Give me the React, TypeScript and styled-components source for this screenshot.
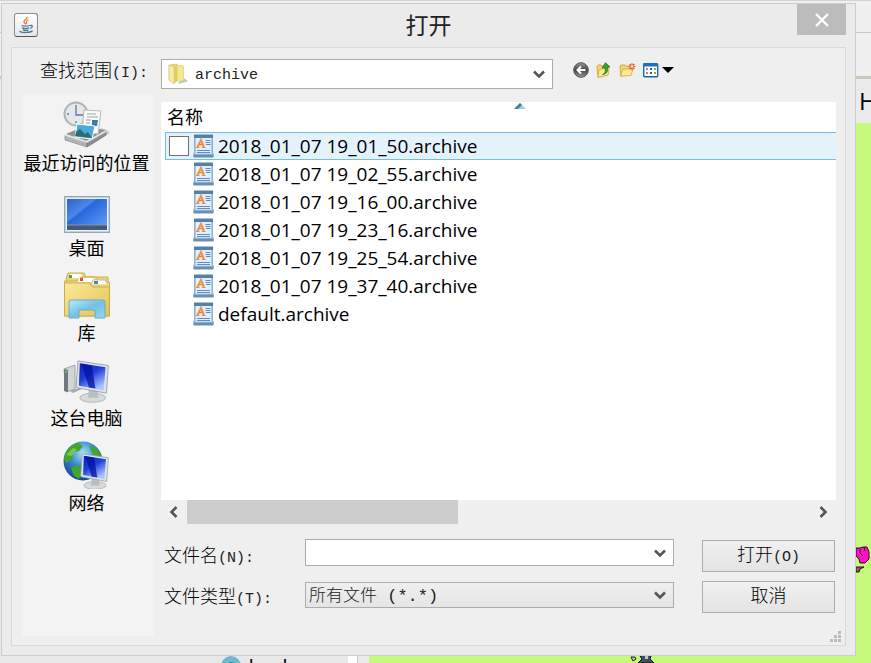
import React from "react";
import styled, { createGlobalStyle } from "styled-components";

const uiFont = `"Open Sans", "Noto Sans CJK SC", sans-serif`;
const monoFont = `"Liberation Mono", "Noto Sans CJK SC", monospace`;
const edge = "#acacac";

const GlobalStyle = createGlobalStyle`
  * { box-sizing: border-box; }
  body { margin: 0; background: #e8e8e8; color: #000; font-family: ${uiFont}; }
  button, input, select { font: inherit; color: inherit; margin: 0; }
`;

const Screen = styled.div`
  position: relative;
  min-height: 100vh;
  padding: 3px 15px 7px 1px;
  overflow: hidden;
`;

/* Application windows behind the dialog */
const Backdrop = styled.div`
  position: absolute;
  inset: 0;
  display: flex;
  flex-direction: column;
  background: #e8e8e8;
`;
const BackMenu = styled.div`
  height: 33px;
  background: #f0f0f0;
  border-top: 1px solid #d2d2d2;
  border-bottom: 1px solid #c8c8c8;
`;
const BackToolbar = styled.div`
  height: 46px;
  background: #f0f0f0;
  border-bottom: 3px solid #c3cbbb;
`;
const BackHeading = styled.div`
  display: flex;
  justify-content: flex-end;
  align-items: center;
  height: 44px;
  background: #ebebeb;
  font: 24px/32px ${uiFont};
`;
const HeadingText = styled.span`
  width: 12px;
`;
const BackBody = styled.div`
  flex: 1;
  display: flex;
`;
const BackPane = styled.div`
  width: 40%;
  display: flex;
  justify-content: flex-end;
  align-items: flex-end;
  padding-right: 61px;
`;
const BackTab = styled.div`
  display: flex;
  gap: 8px;
  height: 7px;
  overflow: hidden;
  font: 19px/22px "Noto Sans", sans-serif;
`;
const BackDivider = styled.div`
  width: 10px;
  background: #fff;
  border-right: 1px solid #c8c8c8;
`;
const BackGap = styled.div`
  width: 11px;
  background: #ececec;
`;
const BackCanvas = styled.div`
  flex: 1;
  position: relative;
  background: #c6fa7c;
`;
const FlowerSprite = styled.svg`
  position: absolute;
  right: 1px;
  bottom: 89px;
`;
const FigureSprite = styled.svg`
  position: absolute;
  left: 52%;
  bottom: 0;
`;

/* Dialog frame */
const Dialog = styled.section`
  position: relative;
  display: flex;
  flex-direction: column;
  min-height: calc(100vh - 10px);
  padding: 0 9px 9px;
  background: #ebebeb;
  border: 1px solid #cdcdcd;
`;
const TitleBar = styled.header`
  display: grid;
  grid-template-columns: 49px 1fr 49px;
  align-items: start;
  height: 43px;
`;
const AppIcon = styled.span`
  display: grid;
  place-items: center;
  width: 24px;
  height: 24px;
  margin: 9px 3px;
  border: 1px solid #8c8c8c;
  border-bottom-color: #555;
  border-radius: 3px;
  background: linear-gradient(#fff, #e2e6ec);
`;
const Title = styled.h1`
  margin: 0;
  text-align: center;
  font: 400 23px/43px ${uiFont};
  color: #222;
`;
const CloseButton = styled.button`
  display: grid;
  place-items: center;
  height: 31px;
  padding: 0;
  border: 0;
  background: #bcbcbc;
`;
const Content = styled.div`
  position: relative;
  flex: 1;
  display: grid;
  grid-template-columns: 132px 1fr;
  grid-template-rows: 30px 1fr;
  gap: 6px 7px;
  padding: 11px 9px 9px 10px;
  background: #efefef;
  border: 1px solid #d9d9d9;
`;

/* Location row */
const Label = styled.label`
  font: 300 18px/26px ${monoFont};
  white-space: nowrap;
`;
const LocationLabel = styled(Label)`
  padding-right: 6px;
  text-align: right;
`;
const Latin = styled.span`
  font-size: 15px;
  color: #222;
`;
const LocationRow = styled.div`
  display: flex;
  gap: 20px;
`;
const Combo = styled.div<{ $basis?: string; $height: number; $raised?: boolean }>`
  position: relative;
  flex: ${(p) => p.$basis ?? "none"};
  display: flex;
  align-items: center;
  height: ${(p) => p.$height}px;
  background: ${(p) => (p.$raised ? "linear-gradient(#efefef, #e5e5e5)" : "#fff")};
  border: 1px solid ${edge};
`;
const Select = styled.select<{ $size: number; $indent: number }>`
  flex: 1;
  min-width: 0;
  height: 100%;
  padding: 2px 28px 0 ${(p) => p.$indent}px;
  border: 0;
  outline: 0;
  appearance: none;
  background: transparent;
  color: #222;
  font: 300 ${(p) => p.$size}px ${monoFont};
`;
const ArrowOverlay = styled.span`
  position: absolute;
  right: 6px;
  top: 0;
  bottom: 0;
  display: flex;
  align-items: center;
  pointer-events: none;
`;
const FolderSlot = styled.span`
  display: flex;
  width: 33px;
  padding-left: 5px;
`;
const NameInput = styled.input`
  flex: 1;
  min-width: 0;
  height: 100%;
  padding: 0 4px;
  border: 0;
  outline: 0;
  background: transparent;
  font: 15px ${monoFont};
`;
const PlainButton = styled.button<{ $width: number }>`
  display: grid;
  place-items: center;
  width: ${(p) => p.$width}px;
  height: 22px;
  padding: 0;
  border: 0;
  background: none;
`;
const Tools = styled.div`
  display: flex;
  gap: 7px;
`;

/* Places bar */
const Places = styled.nav`
  display: flex;
  flex-direction: column;
  gap: 9px;
  padding: 6px 3px 0 0;
  background: #f3f3f3;
`;
const Place = styled.button`
  display: flex;
  flex-direction: column;
  align-items: center;
  padding: 0;
  border: 0;
  background: none;
  font: 400 18px/28px ${uiFont};
  white-space: nowrap;
`;

/* File list */
const Main = styled.main`
  display: flex;
  flex-direction: column;
  min-width: 0;
  padding-top: 7px;
`;
const ListBox = styled.div`
  flex: 1;
  padding-left: 4px;
  background: #fff;
`;
const FileTable = styled.table`
  width: 100%;
  border-collapse: collapse;
`;
const HeadCell = styled.th`
  position: relative;
  height: 30px;
  padding: 0 2px;
  text-align: left;
  font: 400 18px/28px ${uiFont};
`;
const SortMark = styled.svg`
  position: absolute;
  left: 52%;
  top: 1px;
`;
const Cell = styled.td`
  padding: 0;
`;
const FileRow = styled.div<{ $active: boolean }>`
  display: grid;
  grid-template-columns: 20px 21px 1fr;
  column-gap: 4px;
  align-items: center;
  height: 28px;
  padding-left: 3px;
  border: 1px solid ${(p) => (p.$active ? "#78bfd8" : "transparent")};
  border-right: 0;
  background: ${(p) => (p.$active ? "#e4f3fb" : "transparent")};
  font: 19px/26px ${uiFont};
`;
const Tick = styled.input`
  appearance: none;
  width: 20px;
  height: 20px;
  background: #fff;
  border: 1px solid #707070;
`;
const FileName = styled.label`
  grid-column: 3;
  white-space: nowrap;
`;
const FileIconSlot = styled.span`
  display: flex;
  grid-column: 2;
`;
const ScrollBar = styled.div`
  display: flex;
  height: 24px;
  background: #f0f0f0;
`;
const ScrollButton = styled(PlainButton)`
  height: 24px;
`;
const Track = styled.div`
  flex: 1;
`;
const Thumb = styled.div`
  width: 43.5%;
  height: 100%;
  background: #cdcdcd;
`;

/* Bottom form */
const Form = styled.form`
  display: flex;
  padding: 15px 1px 23px 3px;
`;
const Labels = styled.div`
  width: 141px;
  display: flex;
  flex-direction: column;
  gap: 13px;
  padding-top: 5px;
`;
const Fields = styled.div`
  flex: 1;
  display: flex;
  flex-direction: column;
  gap: 16px;
`;
const Actions = styled.div`
  width: 133px;
  display: grid;
  gap: 8px;
  margin-left: 28px;
  padding-top: 1px;
`;
const ActionButton = styled.button`
  height: 32px;
  padding: 1px 0 0;
  border: 1px solid ${edge};
  background: linear-gradient(#f0f0f0, #e4e4e4);
  font: 300 18px/29px ${monoFont};
`;
const Grip = styled.svg`
  position: absolute;
  right: 3px;
  bottom: 2px;
`;

const Chevron = ({ turn = 0 }: { turn?: number }) => (
  <svg width="14" height="14" viewBox="0 0 14 14" aria-hidden="true">
    <path d="M2 4.5 7 9.5 12 4.5" transform={`rotate(${turn} 7 7)`} fill="none" stroke="#555" strokeWidth="2.6" />
  </svg>
);

const JavaIcon = () => (
  <svg width="18" height="20" viewBox="0 0 18 20" fill="none">
    <path d="M10 2c1 2-4 3-3 5 .3 1 1.500 1.500 1.500 2.500M11.500 4.500C8 6.500 10 7 9.500 9" stroke="#e8823a" strokeWidth="1.400" />
    <path d="M4.500 10.500c1.500.8 6.500.8 8.500 0M5 12.800c2 .8 5.500.8 7 0M6 14.800c1.500.6 4 .6 5.500 0M13 10.500c3-1 3 2 0 3" stroke="#52758f" strokeWidth="1.300" />
    <path d="M2.500 16c1 2 11 2 13-.2" stroke="#52758f" strokeWidth="1.300" />
  </svg>
);

const FolderIcon = () => (
  <svg width="22" height="22" viewBox="0 0 22 22">
    <path d="M15 14l6 4-2 1-8 2z" fill="#c4c4be" />
    <path d="M2 2l8-1v17l-8-2z" fill="#e7d173" stroke="#d1bc67" strokeWidth=".6" />
    <path d="M10 2h5l2 1v14l-8 2z" fill="#ecd877" />
    <path d="M2 2l5 2v17l-5-4z" fill="#f7eca5" stroke="#d8c570" strokeWidth=".6" />
    <path d="M7 4l3-2v16l-3 3z" fill="#e2cc69" />
    <path d="M11 3l5 0v14l-5 1z" fill="#f5e68f" />
  </svg>
);

const BackIcon = () => (
  <svg width="16" height="16" viewBox="0 0 16 16">
    <defs><linearGradient id="bk" x2="0" y2="1"><stop stopColor="#999" /><stop offset=".5" stopColor="#444" /><stop offset="1" stopColor="#999" /></linearGradient></defs>
    <circle cx="8" cy="8" r="7.300" fill="url(#bk)" stroke="#555" />
    <path d="M12.500 8H5M8 4.500 4.500 8 8 11.500" fill="none" stroke="#fff" strokeWidth="2" />
  </svg>
);

const UpIcon = () => (
  <svg width="16" height="16" viewBox="0 0 16 16">
    <path d="M1 5l1-2h3l1 1h6v9l-10 2.500z" fill="#f4d567" stroke="#c69a35" strokeWidth=".8" />
    <path d="M3 8l10-3-1 8-10 2.500z" fill="#fbe995" stroke="#d2a843" strokeWidth=".7" />
    <path d="M6.500 12.500c3-1 3-3 2.500-6.500H6L9.500.7 14 5h-2.500c.5 4-.5 7-5 7.500z" fill="#35a52b" stroke="#19701a" strokeWidth=".7" />
  </svg>
);

const NewFolderIcon = () => (
  <svg width="17" height="16" viewBox="0 0 17 16">
    <path d="M1 4l1-1h4l1 1h5v9L1.500 14z" fill="#f2d36c" stroke="#cda13e" strokeWidth=".8" />
    <path d="M4 7h10l-2 6.500L1.500 14z" fill="#fcea9c" stroke="#d6aa4b" strokeWidth=".8" />
    <path d="M13 1v7M9.500 4.500h7M10.500 2l5 5M15.500 2l-5 5" stroke="#ef5932" strokeWidth="1.200" />
    <circle cx="13" cy="4.500" r="1.300" fill="#fff1a0" />
  </svg>
);

const ViewMenuIcon = () => (
  <svg width="31" height="16" viewBox="0 0 31 16">
    <rect x=".7" y="1.700" width="14" height="13" rx="1" fill="#fff" stroke="#1767b3" strokeWidth="1.400" />
    <path d="M0 3h15" stroke="#1e70be" strokeWidth="3" />
    <path d="M3 7h2M3 11h2" stroke="#c27a75" strokeWidth="2" />
    <path d="M7 7h2M7 11h2" stroke="#285f9e" strokeWidth="2" />
    <path d="M11 7h2M11 11h2" stroke="#91a54a" strokeWidth="2" />
    <path d="M19 5h12l-6 6z" fill="#000" />
  </svg>
);

const FileIcon = () => (
  <svg width="21" height="24" viewBox="0 0 21 24">
    <path d="M1.500 3h18v15l1.500 4.500H0L1.500 18z" fill="#a9cde8" stroke="#7fa5c4" strokeWidth=".8" />
    <path d="M3 4h15v15.500H3z" fill="#def0fb" />
    <path d="M1 .5h19V4H1z" fill="#5480a8" />
    <path d="M1 20.500h19V23.500H1z" fill="#6a90b0" />
    <path d="M4.500 13 8 6l3 7" fill="none" stroke="#ee9350" strokeWidth="2.200" />
    <path d="M6 10.700h4M3 13.500h3.500M9 13.500h3.500" stroke="#e98a45" strokeWidth="1.200" />
    <path d="M12.500 6.500h5M12.500 8.500h5M13 10.500h4.500M4 16.500h13M4 18.500h13" stroke="#6189c8" />
  </svg>
);

const RecentIcon = () => (
  <svg width="48" height="48" viewBox="0 0 48 48">
    <path d="M27 45l20-13-2-2-7-3z" fill="#cfcfcf" />
    <circle cx="13" cy="13" r="11.500" fill="#e2e8eb" stroke="#adb5b9" strokeWidth="2" />
    <path d="M13 4v10h8M13 20v2M4 13h2" fill="none" stroke="#677c8b" strokeWidth="1.300" />
    <path d="M3 33 19 26l25 3-21 11z" fill="#8f9294" />
    <path d="M21 9l17 1-3 23-16-2z" fill="#fafafa" stroke="#bababa" />
    <path d="M24 13h9M24 16h11M23 19h5M23 22h4M22 25h5" stroke="#99a4a8" />
    <path d="M29 19h6l-1 6h-5z" fill="#327cae" />
    <path d="M14 23l18 2-3 13-17-2z" fill="#49a8dc" stroke="#fff" />
    <path d="M13 31l4-3 5 5 3-2 4 6-17-2z" fill="#276e71" />
    <path d="M2 34l22 7v5L2 39z" fill="#b2b5b6" stroke="#858889" strokeWidth=".7" />
    <path d="M24 41l19-11v4L24 46z" fill="#8c9092" stroke="#6f7375" strokeWidth=".7" />
    <path d="M2 34l22 7 19-11" fill="none" stroke="#e5e5e5" strokeWidth="1.500" />
  </svg>
);

const DesktopIcon = () => (
  <svg width="48" height="48" viewBox="0 0 48 48">
    <defs><linearGradient id="desk" x2="1" y2="1"><stop stopColor="#285fca" /><stop offset=".35" stopColor="#4e87ea" /><stop offset=".4" stopColor="#2667dc" /><stop offset="1" stopColor="#66a4fa" /></linearGradient></defs>
    <rect x="1.500" y="10.500" width="45" height="36" fill="#c4d0dd" stroke="#93a6bc" />
    <rect x="3.500" y="12.500" width="41" height="32" fill="url(#desk)" stroke="#edf3fc" />
    <path d="M4 39h40v5H4z" fill="#46596e" />
    <path d="M4 39h40" stroke="#8196b2" />
  </svg>
);

const LibraryIcon = () => (
  <svg width="48" height="48" viewBox="0 0 48 48">
    <defs>
      <linearGradient id="lib" x2="1" y2="1"><stop stopColor="#fbeb9c" /><stop offset="1" stopColor="#e3c150" /></linearGradient>
      <linearGradient id="stand" x2="1" y2="1"><stop stopColor="#bceafb" /><stop offset=".5" stopColor="#72c1e1" /><stop offset="1" stopColor="#93d8f3" /></linearGradient>
    </defs>
    <path d="M3 8 5 2h16l2 4h22v36H3z" fill="#ead47d" stroke="#c9ad5b" />
    <path d="M7 3h11l2 4H6zM19 7h13l2 3H17z" fill="#fff" />
    <path d="M1.500 10h13l3-4h16l2 5h11v34h-45z" fill="#f4dc80" stroke="#cdae57" />
    <path d="M16 7h14l3 4H15z" fill="#fff" />
    <path d="M1.500 12h25l3 4h17v29h-45z" fill="url(#lib)" stroke="#c9ab52" />
    <path d="M30 9h12l3 5H28z" fill="#fff" stroke="#d4bd78" />
    <path d="M6 4h3v3H6z" fill="#52a34f" /><path d="M17 7h3v3h-3z" fill="#d55535" /><path d="M31 10h4v3h-4z" fill="#438cc2" />
    <path d="M6 31q0-2 2-2h32q2 0 2 2v16H32v-8H16v8H6z" fill="url(#stand)" stroke="#68acd0" />
  </svg>
);

const MonitorShape = () => (
  <>
    <ellipse cx="29" cy="41" rx="14" ry="5" fill="#d7d9db" stroke="#a4a9ab" strokeWidth=".8" />
    <path d="M25 29h9l1 12H24z" fill="#b9bec2" />
    <path d="M13 1 46 6l-2 30-33-6z" fill="#dfe3e6" stroke="#98a1a7" />
    <path d="M15 3.500 43 8l-2 25-27-5z" fill="url(#screen)" />
    <path d="M17 4 28 6l4 25-7-1z" fill="#0510a0" opacity=".75" />
  </>
);

const ComputerIcon = () => (
  <svg width="48" height="48" viewBox="0 0 48 48">
    <defs><linearGradient id="screen" x2=".6" y2="1"><stop stopColor="#0c1fb8" /><stop offset=".5" stopColor="#1f3fd8" /><stop offset="1" stopColor="#a9c4ff" /></linearGradient></defs>
    <path d="M1 13 12 9v24L3 36z" fill="#d2d5d6" stroke="#a0a4a6" />
    <path d="M1 13l4 1v22l-4-1z" fill="#70787b" /><circle cx="3" cy="16" r="1" fill="#5bd260" />
    <path d="M7 35l9-3 3 1-9 4z" fill="#a6abaf" />
    <g transform="translate(3 4) scale(.92)"><MonitorShape /></g>
  </svg>
);

const NetworkIcon = () => (
  <svg width="48" height="48" viewBox="0 0 48 48">
    <defs><radialGradient id="globe" cx=".5" cy=".3" r=".75"><stop stopColor="#a9e3fa" /><stop offset=".45" stopColor="#378bc9" /><stop offset="1" stopColor="#103d86" /></radialGradient></defs>
    <circle cx="20" cy="20" r="19.500" fill="url(#globe)" />
    <path d="M1 18C2 9 8 3 15 2l5 3-4 5-5 1-2 7-6 4zM8 27l6-3 6 6-4 8-5-3zM26 4l9 5 4 8-8-2-3-5z" fill="#44a52b" />
    <path d="M3 14l7-7 4 1-5 7z" fill="#9add61" opacity=".6" />
    <g transform="translate(9 12) scale(.79)"><MonitorShape /></g>
  </svg>
);

const places = [
  { name: "最近访问的位置", Icon: RecentIcon },
  { name: "桌面", Icon: DesktopIcon },
  { name: "库", Icon: LibraryIcon },
  { name: "这台电脑", Icon: ComputerIcon },
  { name: "网络", Icon: NetworkIcon },
];

const files = [
  "2018_01_07 19_01_50.archive",
  "2018_01_07 19_02_55.archive",
  "2018_01_07 19_16_00.archive",
  "2018_01_07 19_23_16.archive",
  "2018_01_07 19_25_54.archive",
  "2018_01_07 19_37_40.archive",
  "default.archive",
];

const AppBackdrop = () => (
  <Backdrop aria-hidden="true">
    <BackMenu />
    <BackToolbar />
    <BackHeading><HeadingText>H</HeadingText></BackHeading>
    <BackBody>
      <BackPane>
        <BackTab>
          <svg width="20" height="20" viewBox="0 0 20 20"><circle cx="10" cy="10" r="10" fill="#72b7d2" /><circle cx="10" cy="10" r="4" fill="#37829f" /></svg>
          <span>load</span>
        </BackTab>
      </BackPane>
      <BackDivider />
      <BackGap />
      <BackCanvas>
        <FlowerSprite width="14" height="28" viewBox="0 0 14 28">
          <path d="M0 2h4l3-1 4 0 2 5v7l-4 4H4l-1-4-3-3z" fill="#ff10c8" stroke="#29101f" />
          <path d="M4 3v4l3 3M8 1l1 4" fill="none" stroke="#29101f" />
          <path d="M0 21l8 0-4 2-1 3-3 0z" fill="#9b5965" stroke="#29101f" />
        </FlowerSprite>
        <FigureSprite width="25" height="7" viewBox="0 0 25 7">
          <path d="M1 1h4l1 2-3 2z" fill="#e6b9a4" stroke="#222" />
          <path d="M10 0h11l-1 3 4 4H8l4-4z" fill="#345b48" stroke="#111" />
          <path d="M12 0h3v3h-3zM18 0h2v3h-2z" fill="#3848b0" /><path d="M15 0h3v3h-3z" fill="#e6b9a4" />
        </FigureSprite>
      </BackCanvas>
    </BackBody>
  </Backdrop>
);

export default function App() {
  return (
    <Screen>
      <GlobalStyle />
      <AppBackdrop />
      <Dialog role="dialog" aria-labelledby="dialog-title">
        <TitleBar>
          <AppIcon><JavaIcon /></AppIcon>
          <Title id="dialog-title">打开</Title>
          <CloseButton aria-label="关闭">
            <svg width="16" height="14" viewBox="0 0 16 14"><path d="M2 1l12 12M14 1 2 13" stroke="#fff" strokeWidth="2.400" /></svg>
          </CloseButton>
        </TitleBar>
        <Content>
          <LocationLabel htmlFor="location">查找范围<Latin>(I):</Latin></LocationLabel>
          <LocationRow>
            <Combo $basis="0 1 58%" $height={30}>
              <FolderSlot><FolderIcon /></FolderSlot>
              <Select id="location" $size={15} $indent={0}><option>archive</option></Select>
              <ArrowOverlay><Chevron /></ArrowOverlay>
            </Combo>
            <Tools>
              <PlainButton $width={16} aria-label="后退"><BackIcon /></PlainButton>
              <PlainButton $width={16} aria-label="向上一级"><UpIcon /></PlainButton>
              <PlainButton $width={17} aria-label="新建文件夹"><NewFolderIcon /></PlainButton>
              <PlainButton $width={31} aria-label="查看菜单"><ViewMenuIcon /></PlainButton>
            </Tools>
          </LocationRow>
          <Places>
            {places.map(({ name, Icon }) => (
              <Place key={name}><Icon />{name}</Place>
            ))}
          </Places>
          <Main>
            <ListBox>
              <FileTable>
                <thead>
                  <tr>
                    <HeadCell scope="col">
                      名称
                      <SortMark width="12" height="6" viewBox="0 0 12 6"><path d="M0 6 6 0l6 6z" fill="#9fcde2" /><path d="M0 6 6 0l2 2-4 4z" fill="#4d7f9c" /></SortMark>
                    </HeadCell>
                  </tr>
                </thead>
                <tbody>
                  {files.map((file, i) => (
                    <tr key={file}>
                      <Cell>
                        <FileRow $active={i === 0}>
                          {i === 0 && <Tick type="checkbox" id="pick-file" />}
                          <FileIconSlot><FileIcon /></FileIconSlot>
                          <FileName htmlFor={i === 0 ? "pick-file" : undefined}>{file}</FileName>
                        </FileRow>
                      </Cell>
                    </tr>
                  ))}
                </tbody>
              </FileTable>
            </ListBox>
            <ScrollBar>
              <ScrollButton $width={26} aria-label="向左滚动"><Chevron turn={90} /></ScrollButton>
              <Track><Thumb /></Track>
              <ScrollButton $width={26} aria-label="向右滚动"><Chevron turn={-90} /></ScrollButton>
            </ScrollBar>
            <Form onSubmit={(e) => e.preventDefault()}>
              <Labels>
                <Label htmlFor="file-name">文件名<Latin>(N):</Latin></Label>
                <Label htmlFor="file-type">文件类型<Latin>(T):</Latin></Label>
              </Labels>
              <Fields>
                <Combo $height={27}>
                  <NameInput id="file-name" type="text" />
                  <PlainButton $width={26} type="button" aria-label="历史记录"><Chevron /></PlainButton>
                </Combo>
                <Combo $height={26} $raised>
                  <Select id="file-type" $size={17} $indent={3}><option>所有文件 (*.*)</option></Select>
                  <ArrowOverlay><Chevron /></ArrowOverlay>
                </Combo>
              </Fields>
              <Actions>
                <ActionButton type="submit">打开<Latin>(O)</Latin></ActionButton>
                <ActionButton type="button">取消</ActionButton>
              </Actions>
            </Form>
          </Main>
          <Grip width="12" height="12" viewBox="0 0 12 12">
            <path d="M8 0h3v3H8zM4 4h3v3H4zM8 4h3v3H8zM0 8h3v3H0zM4 8h3v3H4zM8 8h3v3H8z" fill="#bcbcbc" />
          </Grip>
        </Content>
      </Dialog>
    </Screen>
  );
}
